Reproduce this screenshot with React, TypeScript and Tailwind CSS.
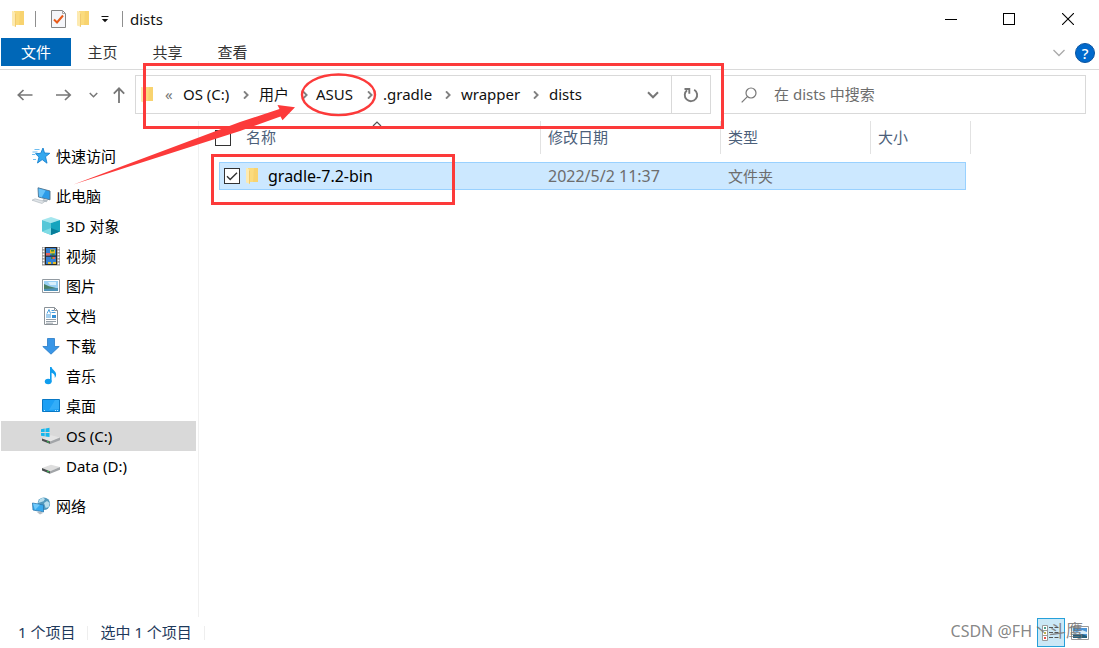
import React, { useState } from "react";

type IconProps = { className?: string };

function Folder({ className = "" }: IconProps) {
  return (
    <svg className={`h-4 w-3 shrink-0 ${className}`} viewBox="0 0 12 16" aria-hidden="true">
      <path d="M2 0h10v14H2z" fill="#fbdb7d" />
      <path d="M8 0h4v14H7z" fill="#f6d06a" opacity="0.7" />
      <path d="M0 0h1.2L4 2.500V16L0 14.500z" fill="#fdeab0" />
      <path d="M3.2 2.2L4 2.500V16l-.8-.4z" fill="#eec461" />
    </svg>
  );
}

function Crumb() {
  return (
    <svg className="h-2 w-1.5 shrink-0" viewBox="0 0 6 8" fill="none" stroke="#808080" strokeWidth="1.9" aria-hidden="true">
      <path d="M1 0.4L4.6 4 1 7.6" />
    </svg>
  );
}

function ChevronDown({ className = "" }: IconProps) {
  return (
    <svg className={className} viewBox="0 0 12 8" fill="none" stroke="currentColor" strokeWidth="2" aria-hidden="true">
      <path d="M1 1.3L6 6.300 11 1.3" />
    </svg>
  );
}

const icons: Record<string, React.ReactNode> = {
  star: (
    <>
      <path d="M11 1l1.500 5 5.300.3-4.300 3.400 1.500 6.500-4.800-3.600-4.700 3.400 1.500-5.900-3.500-3.400 5.200-.4z" fill="#35a8ee" stroke="#1480cf" strokeWidth="0.9" />
      <path d="M2.500 2.500h5M0.500 5h5M0 7.500h3M1 12.500h3" stroke="#5cb6ee" strokeWidth="0.9" />
    </>
  ),
  pc: (
    <>
      <path d="M6 0.800L18 4V12.800L6.500 10z" fill="#2c9be8" stroke="#52728a" strokeWidth="0.9" />
      <path d="M6.600 1.500l7 1.900-4 7L7 9.600z" fill="#67c2f8" />
      <path d="M11.500 12l4.500 1.200-1.500 2.100-4.500-1z" fill="#b5bec5" />
      <path d="M0 13.200l3-1.400 9.800 2.700-2.800 2z" fill="#dfe4e8" stroke="#aab2b8" strokeWidth="0.6" />
    </>
  ),
  cube: (
    <>
      <path d="M9 0l9 3-9 3-9-3z" fill="#a4e6ee" />
      <path d="M0 3l9 3v12l-9-3.500z" fill="#56c7d8" />
      <path d="M18 3L9 6v12l9-3.500z" fill="#15a4be" />
      <path d="M0 14.500L9 11v7z" fill="#80dce5" />
      <path d="M18 14.500L9 11v7z" fill="#087e9a" />
    </>
  ),
  video: (
    <>
      <path d="M0 0h18v18.500H0z" fill="#8d8d8d" />
      <path d="M3 0h12v18H3z" fill="#2b2b2b" />
      <path d="M1.500 0.500v18M16.500 0.500v18" stroke="#fff" strokeWidth="1.700" strokeDasharray="1.800 1.200" />
      <path d="M4 1h10v7.500H4zM4 9.800h10v7.200H4z" fill="#3380d4" />
      <path d="M8 2.500h5v4H8zM6 15h3v2H6zM11 15h3v2h-3z" fill="#e7bd28" />
      <path d="M4 6h4v2.500H4zM10 10h3v2h-3z" fill="#e8635c" />
      <path d="M9 3h3v1.500H9zM9.500 6.500h3v1.500h-3zM9 10h1.500v2H9z" fill="#3c8c35" />
    </>
  ),
  picture: (
    <>
      <path d="M0.500 2.500h17v13h-17z" fill="#fff" stroke="#929aa1" />
      <path d="M2 4h14v10H2z" fill="#9bd1f4" />
      <path d="M6 5h8v3H8z" fill="#d8effc" />
      <path d="M2 7l5 2.200 9 2.300V14H2z" fill="#4a8067" />
      <path d="M2 12l14-1v3H2z" fill="#4d92b8" />
    </>
  ),
  document: (
    <>
      <path d="M2.500 0.500h10l3 3v14h-13z" fill="#fff" stroke="#8b9298" />
      <path d="M12.500 0.500v3h3" fill="none" stroke="#8b9298" />
      <path d="M5 6.500L7 2.500l1.500 4M9.500 3.500h2.500M9.500 5.500h4M4 8h5M4 10h5" stroke="#3393d9" strokeWidth="0.9" fill="none" />
      <path d="M10 8h4v3h-4z" fill="#338fd5" />
      <path d="M4 12.500h10M4 14.500h10M4 16.200h7" stroke="#89949d" strokeWidth="0.9" />
    </>
  ),
  download: <path d="M5.500 1.500h7v8h4.700L9 17.200.8 9.500h4.700z" fill="#3996e7" stroke="#267ac5" strokeWidth="0.8" />,
  music: (
    <>
      <ellipse cx="6.200" cy="14.500" rx="3.400" ry="2.800" fill="#109dee" />
      <path d="M8 0h1.600c.2 3 5.400 4 4.400 8.800-.3 1-.7 1.600-1.200 2.100.4-3-1-4.400-3.200-5.100v9H8z" fill="#109dee" />
    </>
  ),
  desktop: (
    <>
      <path d="M0.500 2.500h17v12h-17z" fill="#1ca0f5" stroke="#0878c5" />
      <path d="M13 3h4v9l-10 1z" fill="#43b5fa" opacity="0.6" />
      <path d="M2 13.500h1M13 13.500h1M15 13.500h1" stroke="#d5f1ff" strokeWidth="0.9" />
    </>
  ),
  windows: (
    <>
      <path d="M0 11.500l9-3.200 9 2.300-9.700 4z" fill="#e4e4e4" />
      <path d="M0 11.500l8.300 3.100v2.400L0 13.700z" fill="#4b4e50" />
      <path d="M8.300 14.600L18 10.600v2.600l-9.700 3.800z" fill="#a2a5a8" />
      <path d="M5 14l2 .8v1l-2-.8z" fill="#32ca4f" />
      <path d="M-1 2.200l3.700-.6v3.500H-1zM3.500 1.500l4-.7v4.300h-4zM-1 5.900h3.700v3.400L-1 8.800zM3.500 5.900h4v4.200l-4-.7z" fill="#16b7ed" />
    </>
  ),
  drive: (
    <>
      <path d="M0 11l9-3.200 9 2.300-10 4.100z" fill="#dedede" />
      <path d="M0 11l8 3.200v2.500L0 13.500z" fill="#4b4e50" />
      <path d="M8 14.200l10-4.100v2.700L8 16.700z" fill="#a2a5a8" />
      <path d="M5 13.600l2 .8v1l-2-.8z" fill="#32ca4f" />
    </>
  ),
  network: (
    <>
      <circle cx="11.800" cy="6.800" r="6.300" fill="#5299bd" />
      <path d="M8 2l3-1.200 2 1.100-1.500 2.300-3 1L6 6zM12 6l3-2 2.700 2-1 4-3 1z" fill="#b8deed" />
      <path d="M0.500 6L11.500 8v7L1 13z" fill="#38a9ed" stroke="#2c76ab" strokeWidth="0.8" />
      <path d="M1 6.500l7 1.300L3 13z" fill="#70c9fa" />
      <path d="M5 15.200l3-1 3 1.800-3 1.500z" fill="#b5bdc3" />
    </>
  ),
};

type Place = { icon: string; label: string; child?: boolean; gap?: boolean; selected?: boolean };

const places: Place[] = [
  { icon: "star", label: "快速访问" },
  { icon: "pc", label: "此电脑", gap: true },
  { icon: "cube", label: "3D 对象", child: true },
  { icon: "video", label: "视频", child: true },
  { icon: "picture", label: "图片", child: true },
  { icon: "document", label: "文档", child: true },
  { icon: "download", label: "下载", child: true },
  { icon: "music", label: "音乐", child: true },
  { icon: "desktop", label: "桌面", child: true },
  { icon: "windows", label: "OS (C:)", child: true, selected: true },
  { icon: "drive", label: "Data (D:)", child: true },
  { icon: "network", label: "网络", gap: true },
];

function TitleBar() {
  return (
    <header className="flex h-[38px] items-center pl-3">
      <Folder />
      <span className="ml-[11px] h-4 w-px bg-[#8f8f8f]" />
      <button aria-label="属性" className="ml-[15px]">
        <svg className="h-[18px] w-[15px]" viewBox="0 0 15 18" aria-hidden="true">
          <path d="M.5.500h11l3 3v14H.5z" fill="#f5f6fa" stroke="#858585" />
          <path d="M11.500.500v3h3" fill="none" stroke="#a5a5a5" />
          <path d="M3 9.500l3 3 6-7" fill="none" stroke="#e85a19" strokeWidth="2" />
        </svg>
      </button>
      <button aria-label="新建文件夹" className="ml-[11px]">
        <Folder />
      </button>
      <button aria-label="自定义快速访问工具栏" className="ml-3">
        <svg className="h-2 w-2" viewBox="0 0 8 8" aria-hidden="true">
          <path d="M.5 1.500h7" stroke="#111" />
          <path d="M.8 4h6.400L4 7.300z" fill="#111" />
        </svg>
      </button>
      <span className="ml-[13px] h-4 w-px bg-[#8f8f8f]" />
      <h1 className="ml-[7px] text-[15px] text-[#111]">dists</h1>
      <div className="ml-auto flex h-full pr-px">
        <button aria-label="最小化" className="flex w-[58px] items-center justify-center">
          <span className="h-px w-3 bg-black" />
        </button>
        <button aria-label="最大化" className="flex w-[58px] items-center justify-center">
          <span className="h-3 w-3 border border-black" />
        </button>
        <button aria-label="关闭" className="flex w-[60px] items-center justify-center">
          <svg className="h-3 w-3" viewBox="0 0 12 12" stroke="#000" strokeWidth="1.1" aria-hidden="true">
            <path d="M0 0l12 12M12 0L0 12" />
          </svg>
        </button>
      </div>
    </header>
  );
}

function Ribbon() {
  return (
    <nav className="flex h-8 items-start border-b border-[#dadada] pl-px text-[15px] text-[#333]">
      <button className="h-7 w-[70px] bg-[#0067b7] text-white">文件</button>
      <button className="h-7 w-[65px] pr-0.5">主页</button>
      <button className="h-7 w-[65px] pr-0.5">共享</button>
      <button className="h-7 w-[65px] pr-0.5">查看</button>
      <div className="ml-auto flex h-[30px] items-center gap-2.5 pr-1">
        <button aria-label="展开功能区">
          <svg className="h-2 w-3" viewBox="0 0 12 8" fill="none" stroke="#aaa" strokeWidth="1.300" aria-hidden="true">
            <path d="M.5 1L6 6.500 11.500 1" />
          </svg>
        </button>
        <button aria-label="帮助" className="h-5 w-5 rounded-full border border-[#0a54a0] bg-[#0069cc] text-[15px] leading-[18px] font-medium text-white">
          ?
        </button>
      </div>
    </nav>
  );
}

function AddressRow() {
  return (
    <div className="flex pt-[5px] pr-[13px]">
      <div className="flex h-[39px] w-[135px] shrink-0 items-center pl-[17px] text-[#777]">
        <button aria-label="后退">
          <svg className="h-3 w-4" viewBox="0 0 16 12" fill="none" stroke="currentColor" strokeWidth="1.7" aria-hidden="true">
            <path d="M15.500 6H1.500M6.500 1L1.300 6l5.200 5" />
          </svg>
        </button>
        <button aria-label="前进" className="ml-[23px]">
          <svg className="h-3 w-4" viewBox="0 0 16 12" fill="none" stroke="currentColor" strokeWidth="1.7" aria-hidden="true">
            <path d="M0 6h14M9 1l5.200 5L9 11" />
          </svg>
        </button>
        <button aria-label="最近位置" className="ml-[17px]">
          <ChevronDown className="h-1.5 w-[9px]" />
        </button>
        <button aria-label="上移" className="ml-[15px]">
          <svg className="h-4 w-3" viewBox="0 0 12 16" fill="none" stroke="currentColor" strokeWidth="1.8" aria-hidden="true">
            <path d="M6 16V1.500M.8 6.700L6 1.300l5.200 5.400" />
          </svg>
        </button>
      </div>
      <div className="flex h-[39px] min-w-0 flex-1 border border-[#d9d9d9]">
        <div className="flex min-w-0 flex-1 items-center pl-[5px] text-[15px] whitespace-nowrap text-[#111]">
          <Folder />
          <span className="ml-3 w-[9px] text-[#777]">«</span>
          <button className="ml-[9px] w-[60px] text-left">OS (C:)</button>
          <Crumb />
          <button className="ml-[10px] w-[43px] text-left">用户</button>
          <Crumb />
          <button className="ml-2 w-[51px] text-left">ASUS</button>
          <Crumb />
          <button className="ml-[10px] w-[62px] text-left">.gradle</button>
          <Crumb />
          <button className="ml-[10px] w-[72px] text-left">wrapper</button>
          <Crumb />
          <button className="ml-[10px] text-left">dists</button>
          <button aria-label="以前的位置" className="mr-3 ml-auto">
            <ChevronDown className="h-2 w-3 text-[#777]" />
          </button>
        </div>
        <button aria-label="刷新" className="flex w-[39px] items-center justify-center border-l border-[#d9d9d9]">
          <svg className="h-4 w-4" viewBox="0 0 16 16" fill="none" stroke="#777" strokeWidth="1.9" aria-hidden="true">
            <path d="M11.200 2.700a6.200 6.200 0 1 1-7.200.5" />
            <path d="M1.500 2h4.800v4.800" />
          </svg>
        </button>
      </div>
      <label className="ml-2.5 flex h-[39px] w-[365px] items-center border border-[#d9d9d9] pl-[19px]">
        <svg className="h-4 w-4 shrink-0" viewBox="0 0 16 16" fill="none" stroke="#777" strokeWidth="1.2" aria-hidden="true">
          <circle cx="10" cy="6" r="5" />
          <path d="M6.400 9.600L.7 15.300" />
        </svg>
        <input
          aria-label="搜索"
          placeholder="在 dists 中搜索"
          className="ml-[17px] min-w-0 flex-1 text-[15px] outline-none placeholder:text-[#6d6d6d]"
        />
      </label>
    </div>
  );
}

function Sidebar() {
  return (
    <aside className="w-[199px] shrink-0 border-r border-[#f0f0f0] pt-5 pr-0.5 pl-px">
      <ul>
        {places.map((p) => (
          <li key={p.label} className={p.gap ? "mt-2.5" : ""}>
            <a
              href="#"
              className={`flex h-[30px] items-center gap-1.5 text-[15px] text-black ${p.child ? "pl-[41px]" : "pl-[31px]"} ${p.selected ? "bg-[#d9d9d9]" : ""}`}
            >
              <svg className="h-[18px] w-[18px] shrink-0 overflow-visible" viewBox="0 0 18 18" aria-hidden="true">
                {icons[p.icon]}
              </svg>
              {p.label}
            </a>
          </li>
        ))}
      </ul>
    </aside>
  );
}

const boxClass = "grid h-4 w-4 shrink-0 appearance-none border border-[#333] bg-white";
const headClass = "flex h-[33px] items-center border-r border-[#e2e2e2] pl-[7px]";

function FileList() {
  const [checked, setChecked] = useState(true);
  const cell = "border-y border-[#99d1ff] bg-[#cce8ff] p-0";
  return (
    <main className="min-w-0 flex-1 pl-4">
      <table className="w-[756px] table-fixed border-separate border-spacing-0 text-left text-[15px]">
        <colgroup>
          <col className="w-1" />
          <col className="w-[322px]" />
          <col className="w-[180px]" />
          <col className="w-[150px]" />
          <col className="w-[95px]" />
          <col className="w-[5px]" />
        </colgroup>
        <thead className="text-[#4c607a]">
          <tr>
            <th colSpan={2} className="p-0 pb-2 font-normal">
              <div className="relative flex h-[33px] items-center gap-[15px] border-r border-[#e2e2e2]">
                <input type="checkbox" aria-label="全选" className={boxClass} />
                名称
                <svg className="absolute top-0 left-[157px] h-1.5 w-2.5" viewBox="0 0 10 6" fill="none" stroke="#555" strokeWidth="1.2" aria-hidden="true">
                  <path d="M1 5l4-4 4 4" />
                </svg>
              </div>
            </th>
            <th className="p-0 pb-2 font-normal">
              <div className={headClass}>修改日期</div>
            </th>
            <th className="p-0 pb-2 font-normal">
              <div className={headClass}>类型</div>
            </th>
            <th colSpan={2} className="p-0 pb-2 font-normal">
              <div className={headClass}>大小</div>
            </th>
          </tr>
        </thead>
        <tbody className="text-[#6d6d6d]">
          <tr>
            <td className="p-0" />
            <td className={`${cell} border-l`}>
              <label className="flex h-[26px] items-center pl-1 text-black">
                <span className="relative h-4 w-4">
                  <input
                    type="checkbox"
                    checked={checked}
                    onChange={(e) => setChecked(e.target.checked)}
                    className={boxClass}
                  />
                  {checked && (
                    <svg className="pointer-events-none absolute inset-0 h-4 w-4" viewBox="0 0 16 16" fill="none" stroke="#333" strokeWidth="1.4" aria-hidden="true">
                      <path d="M3 8.300l3.200 3.200L13 4.700" />
                    </svg>
                  )}
                </span>
                <Folder className="ml-1.5" />
                <span className="ml-2.5 text-[16px]">gradle-7.2-bin</span>
              </label>
            </td>
            <td className={`${cell} pl-[7px] text-[16px] leading-[22px]`}>2022/5/2 11:37</td>
            <td className={`${cell} pl-[7px]`}>文件夹</td>
            <td className={`${cell} border-r`} />
            <td className="p-0" />
          </tr>
        </tbody>
      </table>
    </main>
  );
}

function StatusBar() {
  return (
    <footer className="flex h-[31px] items-center pr-2 pl-[18px] text-[15px] text-[#1e395b]">
      <span>1 个项目</span>
      <span className="mx-3 h-3.5 w-px bg-[#eee]" />
      <span>选中 1 个项目</span>
      <span className="mx-3 h-3.5 w-px bg-[#eee]" />
      <div className="relative ml-auto flex items-center gap-1">
        <button aria-label="详细信息" className="grid h-[29px] w-7 place-items-center border border-[#26a0da] bg-[#cbe8f6]">
          <svg className="h-4 w-[18px]" viewBox="0 0 18 16" fill="none" aria-hidden="true">
            <path d="M.5.500h5v15h-5zM.5 5.500h5M.5 10.500h5" fill="#fff" stroke="#999" />
            <path d="M2.500 2.500h1v1h-1z" fill="#268b77" stroke="#268b77" />
            <path d="M2.500 7.500h1v1h-1z" fill="#b2a12d" stroke="#b2a12d" />
            <path d="M2.500 12.500h1v1h-1z" fill="#e22b22" stroke="#e22b22" />
            <path d="M7 2.500h4M12.500 2.500h4M7 7.500h4M12.500 7.500h4M7 12.500h4M12.500 12.500h4" stroke="#555" />
          </svg>
        </button>
        <button aria-label="大图标" className="grid h-[29px] w-[22px] place-items-center">
          <svg className="h-[14px] w-[18px]" viewBox="0 0 18 14" aria-hidden="true">
            <path d="M.5.500h17v13H.5z" fill="#fff" stroke="#999" />
            <path d="M2 2h14v10H2z" fill="#4b94d6" />
            <path d="M2 5l4 1 5-2 5 2v2H2z" fill="#d7ecf8" />
            <path d="M2 9l9-1 5 2v2H2z" fill="#245e79" />
          </svg>
        </button>
        <span className="pointer-events-none absolute right-2 bottom-1 text-[16px] whitespace-nowrap text-[#777]/90">
          CSDN @FH<span className="text-[17px]">丶斗鹰</span>
        </span>
      </div>
    </footer>
  );
}

function Annotations() {
  return (
    <div className="pointer-events-none absolute inset-0">
      <div className="absolute top-[63px] left-[143px] h-[66px] w-[581px] border-3 border-[#fc3a3a]" />
      <div className="absolute top-[154px] left-[211px] h-[51px] w-[244px] border-3 border-[#fc3a3a]" />
      <svg className="absolute top-[70px] left-[70px] h-[120px] w-[310px]" viewBox="70 70 310 120" aria-hidden="true">
        <ellipse cx="338.500" cy="94.800" rx="36.500" ry="20.300" fill="none" stroke="#fc3a3a" strokeWidth="2.4" />
        <path d="M73.500 184.500L130 163.300 240 122 279.500 109 277.500 105 295 107.300 282.500 120.200 280.500 116.500 240 131 130 166.300z" fill="#fc3a3a" />
      </svg>
    </div>
  );
}

export default function App() {
  return (
    <div className="relative flex min-h-screen flex-col bg-white font-['Noto_Sans','Noto_Sans_CJK_SC',sans-serif]">
      <TitleBar />
      <Ribbon />
      <AddressRow />
      <div className="flex flex-1 pt-[7px]">
        <Sidebar />
        <FileList />
      </div>
      <StatusBar />
      <Annotations />
    </div>
  );
}
